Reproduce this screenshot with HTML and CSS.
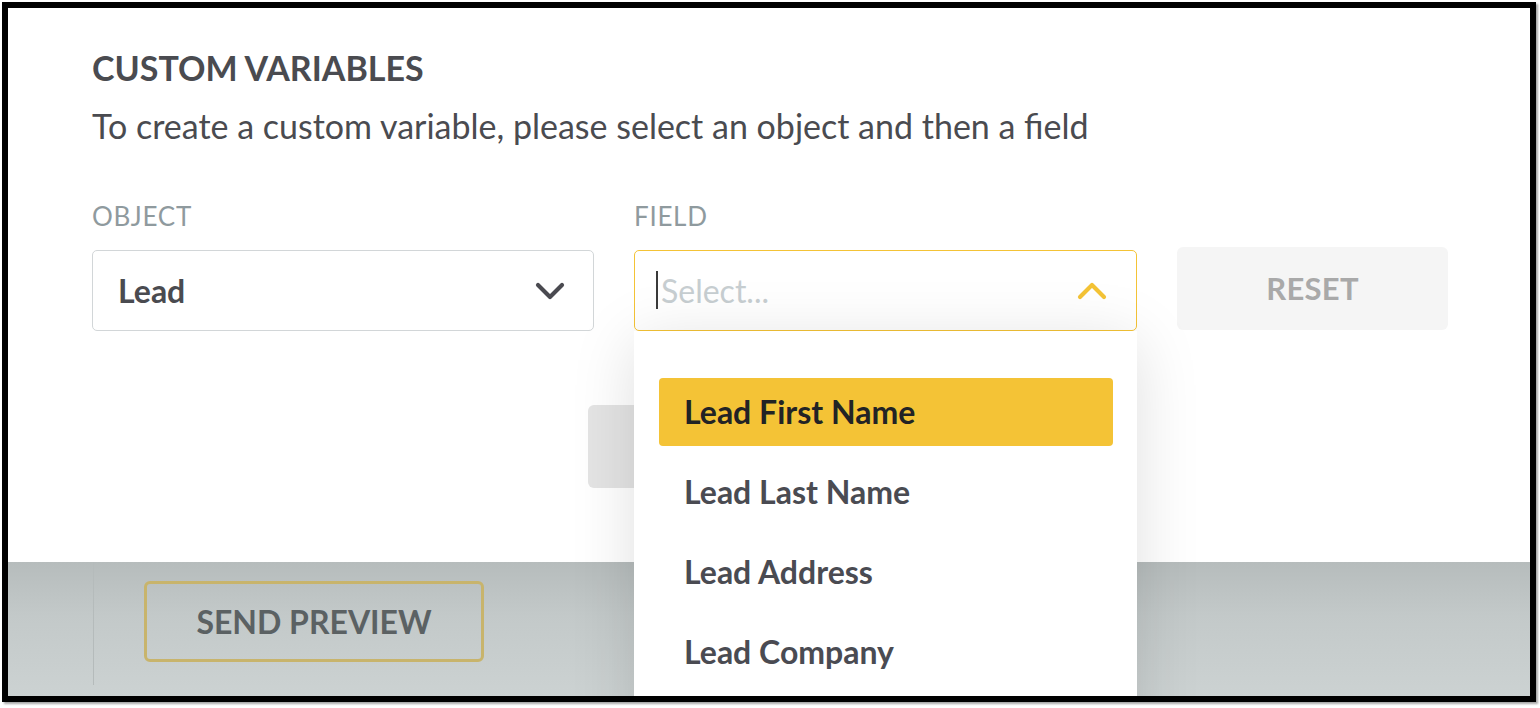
FILE: index.html
```html
<!DOCTYPE html>
<html>
<head>
<meta charset="utf-8">
<link rel="stylesheet" href="styles.css">
</head>
<body>
<div class="frame">
  <div class="modal">
    <h1 class="title">CUSTOM VARIABLES</h1>
    <p class="subtitle">To create a custom variable, please select an object and then a field</p>
    <div class="form-grid">
      <div class="label">OBJECT</div>
      <div class="label">FIELD</div>
      <div></div>
      <div class="select">
        <span class="value">Lead</span>
        <svg class="chev" width="30" height="20" viewBox="0 0 30 20"><path d="M3 4 L15 16 L27 4" fill="none" stroke="#4a4a50" stroke-width="4.2" stroke-linecap="round" stroke-linejoin="round"/></svg>
      </div>
      <div class="field-wrap">
        <div class="select focused">
          <span class="caret"></span><span class="placeholder">Select...</span>
          <svg class="chev" width="30" height="20" viewBox="0 0 30 20"><path d="M3 16 L15 4 L27 16" fill="none" stroke="#f4c336" stroke-width="4.2" stroke-linecap="round" stroke-linejoin="round"/></svg>
        </div>
        <ul class="menu">
          <li class="item active">Lead First Name</li>
          <li class="item">Lead Last Name</li>
          <li class="item">Lead Address</li>
          <li class="item">Lead Company</li>
        </ul>
      </div>
      <button class="reset">RESET</button>
    </div>
    <div class="add-row"><button class="add" aria-label="Add"></button></div>
  </div>
  <div class="backdrop">
    <div class="side-line"></div>
    <button class="preview">SEND PREVIEW</button>
  </div>
</div>
</body>
</html>
```

FILE: styles.css
```css
* { box-sizing: border-box; }
html, body { margin: 0; padding: 0; background: #ffffff; }
body { font-family: Lato, "Open Sans", sans-serif; width: 1540px; height: 708px; overflow: hidden; }

.frame {
  margin: 2px 0 0 2px;
  width: 1534px;
  height: 700px;
  border: 6px solid #000;
  box-shadow: 2px 2px 2px rgba(0,0,0,0.35);
  position: relative;
  overflow: hidden;
  display: flex;
  flex-direction: column;
  background: #fff;
}

.modal {
  height: 554px;
  flex: none;
  background: #fff;
  padding: 40px 0 0 84px;
  position: relative;
  z-index: 2;
}

.title {
  margin: 0;
  font-size: 34px;
  line-height: 1.2;
  font-weight: 700;
  color: #4a4b50;
}

.subtitle {
  margin: 17px 0 0 0;
  font-size: 34px;
  line-height: 1.2;
  font-weight: 400;
  color: #4a4b50;
}

.form-grid {
  margin-top: 54px;
  display: grid;
  grid-template-columns: 502px 503px 271px;
  column-gap: 40px;
  row-gap: 18px;
  align-items: start;
}

.label {
  font-size: 26px;
  line-height: 1.2;
  color: #8f9a9e;
  letter-spacing: 0.7px;
}

.select {
  height: 81px;
  border: 1px solid #d2d6d8;
  border-radius: 5px;
  display: flex;
  align-items: center;
  padding: 0 28px 0 25px;
  background: #fff;
}
.select .value {
  font-size: 32px;
  font-weight: 700;
  color: #4a4b50;
  flex: 1;
}
.select .chev { flex: none; margin-top: 2px; }

.field-wrap { position: relative; }
.select.focused {
  border-color: #f4c336;
  padding-left: 21px;
  padding-right: 29px;
  position: relative;
  z-index: 1;
}
.caret {
  width: 2px;
  height: 38px;
  background: #3a3a3a;
  margin-right: 3px;
  flex: none;
}
.placeholder {
  font-size: 32px;
  color: #c7ced1;
  flex: 1;
}

.menu {
  position: absolute;
  left: 0;
  top: 100%;
  width: 503px;
  height: 420px;
  margin: 0;
  padding: 47px 24px 0 25px;
  list-style: none;
  background: #fff;
  box-shadow: 0 10px 60px rgba(0,0,0,0.13);
  z-index: 3;
}
.item {
  height: 68px;
  margin-bottom: 12px;
  border-radius: 4px;
  padding-left: 25px;
  display: flex;
  align-items: center;
  font-size: 32px;
  font-weight: 700;
  color: #4a4b52;
}
.item.active {
  background: #f4c336;
  color: #222325;
}

.reset {
  height: 83px;
  margin-top: -3px;
  border: none;
  border-radius: 6px;
  background: #f5f5f5;
  font-family: Lato, "Open Sans", sans-serif;
  font-size: 31px;
  font-weight: 700;
  color: #a9a9a9;
  letter-spacing: 0.3px;
}

.add-row {
  margin-top: 74px;
  width: 1354px;
  display: flex;
  justify-content: center;
}
.add {
  width: 362px;
  height: 83px;
  border: none;
  border-radius: 6px;
  background: #e4e4e4;
}

.backdrop {
  flex: 1;
  background: linear-gradient(180deg, #b6bcbc 0%, #c3c9c9 40%, #ccd2d2 100%);
  display: flex;
  align-items: flex-start;
  padding: 19px 0 0 84px;
  position: relative;
  z-index: 1;
}
.side-line {
  position: absolute;
  left: 85px;
  top: 0;
  width: 1px;
  height: 123px;
  background: #b5bbbb;
}
.preview {
  margin-left: 52px;
  width: 340px;
  height: 81px;
  border: 3px solid #c8b46c;
  border-radius: 6px;
  background: transparent;
  font-family: Lato, "Open Sans", sans-serif;
  font-size: 32px;
  font-weight: 700;
  color: #5b6163;
}
```
